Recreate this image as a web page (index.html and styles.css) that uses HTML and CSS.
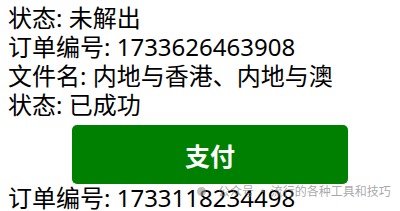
FILE: index.html
```html
<!DOCTYPE html>
<html lang="zh">
<head>
<meta charset="utf-8">
<link rel="stylesheet" href="styles.css">
</head>
<body>
<div class="line">状态: 未解出</div>
<div class="line">订单编号: 1733626463908</div>
<div class="line">文件名: 内地与香港、内地与澳</div>
<div class="line">状态: 已成功</div>
<button class="pay">支付</button>
<div class="line last">订单编号: 1733118234498<span class="mark"><span class="dot"></span>公众号&thinsp;·&thinsp;流行的各种工具和技巧</span></div>
</body>
</html>
```
FILE: styles.css
```css
html, body { margin: 0; padding: 0; background: #fff; }
body {
  padding: 0 8px;
  font-family: "Noto Sans", "Noto Sans CJK SC", sans-serif;
  font-size: 24px;
  color: #000;
  overflow: hidden;
  height: 211px;
}
.line {
  height: 29px;
  line-height: 29px;
  white-space: nowrap;
}
.line:first-child { margin-top: 3px; }
.pay {
  display: block;
  margin: 6px 0 0 64px;
  width: 276px;
  height: 59px;
  border: 0;
  border-radius: 5px;
  background: #008000;
  color: #fff;
  font-family: "Noto Sans CJK SC", sans-serif;
  font-weight: 700;
  font-size: 25px;
  padding: 0;
}
.last { position: relative; margin-top: -1px; }
.mark {
  position: absolute;
  left: 189px;
  top: 1px;
  font-size: 12px;
  line-height: 14px;
  color: rgba(130,130,130,0.7);
  font-family: "Noto Sans CJK SC", sans-serif;
  display: flex;
  align-items: center;
  gap: 12px;
}
.dot {
  width: 9px;
  height: 9px;
  border-radius: 50%;
  background: rgba(150,150,150,0.6);
}
```
